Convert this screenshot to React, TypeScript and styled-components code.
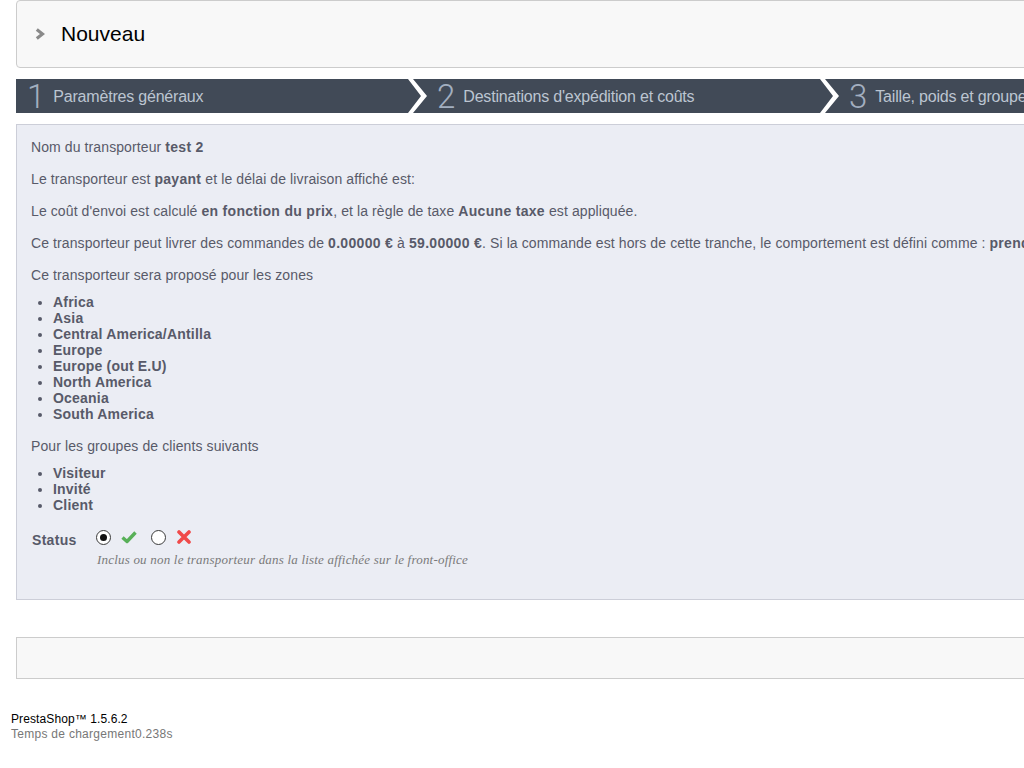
import React from "react";
import styled, { createGlobalStyle } from "styled-components";

const Global = createGlobalStyle`
  html, body {
    margin: 0;
    padding: 0;
    overflow: hidden;
    background: #ffffff;
    font-family: "Liberation Sans", Arial, sans-serif;
  }
`;

const Page = styled.div`
  width: 1600px;
  display: flex;
  flex-direction: column;
`;

const Main = styled.div`
  padding-left: 16px;
  display: flex;
  flex-direction: column;
`;

const TitleBox = styled.div`
  box-sizing: border-box;
  height: 68px;
  background: #f8f8f8;
  border: 1px solid #cccccc;
  border-radius: 4px;
  display: flex;
  align-items: center;
  padding-left: 18px;
  gap: 16px;
`;

const Title = styled.h2`
  margin: 0;
  font-size: 21px;
  font-weight: normal;
  color: #000;
`;

const StepBar = styled.ol`
  list-style: none;
  margin: 11px 0 0;
  padding: 0;
  height: 34px;
  background: #414a57;
  display: flex;
  align-items: stretch;
`;

const Step = styled.li<{ $first?: boolean }>`
  width: 392px;
  display: flex;
  align-items: center;
  padding-left: ${(p) => (p.$first ? "11px" : "9px")};
  box-sizing: border-box;
  flex: none;
`;

const StepNum = styled.span`
  font-family: Roboto, "Liberation Sans", sans-serif;
  font-weight: 300;
  font-size: 33px;
  line-height: 34px;
  color: #a3afc0;
  margin-right: 8px;
  margin-top: 1px;
`;

const StepLabel = styled.span`
  font-size: 16px;
  color: #bcc5d1;
  white-space: nowrap;
  letter-spacing: -0.2px;
  margin-top: 2px;
`;

const Sep = styled.svg`
  width: 20px;
  height: 34px;
  flex: none;
  display: block;
`;

const Panel = styled.div`
  margin-top: 11px;
  background: #ebedf4;
  border: 1px solid #ccced8;
  padding: 13px 14px 32px;
  color: #585a69;
  font-size: 14px;
  b {
    letter-spacing: 0.3px;
  }
`;

const Para = styled.p<{ $tight?: boolean }>`
  margin: 0 0 ${(p) => (p.$tight ? "10px" : "14px")};
  line-height: 18px;
  white-space: nowrap;
  letter-spacing: 0.1px;
`;

const List = styled.ul<{ $last?: boolean }>`
  margin: 0 0 ${(p) => (p.$last ? "0" : "15px")};
  padding-left: 22px;
  line-height: 16px;
  font-weight: bold;
  letter-spacing: 0.2px;
`;

const StatusRow = styled.div`
  margin-top: 15px;
  display: flex;
  align-items: flex-start;
`;

const StatusLabel = styled.label`
  width: 65px;
  padding-left: 1px;
  box-sizing: border-box;
  font-weight: bold;
  line-height: 18px;
  padding-top: 3px;
  letter-spacing: 0.3px;
`;

const StatusField = styled.div`
  display: flex;
  flex-direction: column;
`;

const RadioGroup = styled.div`
  height: 18px;
  display: flex;
  align-items: center;
`;

const Radio = styled.span<{ $checked?: boolean }>`
  box-sizing: border-box;
  width: 15px;
  height: 15px;
  border-radius: 50%;
  border: 1px solid #3a3a3a;
  background: #fff;
  display: flex;
  align-items: center;
  justify-content: center;
  &::after {
    content: "";
    width: 7px;
    height: 7px;
    border-radius: 50%;
    background: ${(p) => (p.$checked ? "#111" : "transparent")};
  }
`;

const Icon = styled.svg<{ $ml: number; $mr: number }>`
  display: block;
  margin-left: ${(p) => p.$ml}px;
  margin-right: ${(p) => p.$mr}px;
`;

const Help = styled.p`
  margin: 6px 0 0 1px;
  font-family: "Liberation Serif", "DejaVu Serif", serif;
  font-style: italic;
  font-size: 13px;
  line-height: 15px;
  letter-spacing: 0.2px;
  color: #7a7a7a;
  white-space: nowrap;
`;

const BottomBox = styled.div`
  margin-top: 37px;
  box-sizing: border-box;
  height: 42px;
  background: #f8f8f8;
  border: 1px solid #cccccc;
`;

const Footer = styled.div`
  margin-top: 33px;
  padding-left: 11px;
  font-size: 12px;
  line-height: 15px;
`;

const Version = styled.div`
  color: #000;
  letter-spacing: 0.1px;
`;

const LoadTime = styled.div`
  color: #777;
  letter-spacing: 0.28px;
`;

const Chevron = () => (
  <svg width="10" height="12" viewBox="0 0 10 12">
    <path d="M1.8 1.5 L7.5 6 L1.8 10.5" fill="none" stroke="#8a8a8a" strokeWidth="3.2" />
  </svg>
);

const Separator = () => (
  <Sep viewBox="0 0 20 34">
    <path d="M0 0 L5 0 L19 17 L5 34 L0 34 L13 17 Z" fill="#ffffff" />
  </Sep>
);

const steps = [
  "Paramètres généraux",
  "Destinations d'expédition et coûts",
  "Taille, poids et groupes",
];

export default function App() {
  return (
    <Page>
      <Global />
      <Main>
        <TitleBox>
          <Chevron />
          <Title>Nouveau</Title>
        </TitleBox>

        <StepBar>
          {steps.map((s, i) => (
            <React.Fragment key={s}>
              <Step $first={i === 0}>
                <StepNum>{i + 1}</StepNum>
                <StepLabel>{s}</StepLabel>
              </Step>
              {i < steps.length - 1 && <Separator />}
            </React.Fragment>
          ))}
        </StepBar>

        <Panel>
          <Para>
            Nom du transporteur <b>test 2</b>
          </Para>
          <Para>
            Le transporteur est <b>payant</b> et le délai de livraison affiché est:
          </Para>
          <Para>
            Le coût d'envoi est calculé <b>en fonction du prix</b>, et la règle de taxe{" "}
            <b>Aucune taxe</b> est appliquée.
          </Para>
          <Para>
            Ce transporteur peut livrer des commandes de <b>0.00000 €</b> à <b>59.00000 €</b>. Si la
            commande est hors de cette tranche, le comportement est défini comme :{" "}
            <b>prendre la tranche la plus grande</b>
          </Para>
          <Para $tight>Ce transporteur sera proposé pour les zones</Para>
          <List>
            <li>Africa</li>
            <li>Asia</li>
            <li>Central America/Antilla</li>
            <li>Europe</li>
            <li>Europe (out E.U)</li>
            <li>North America</li>
            <li>Oceania</li>
            <li>South America</li>
          </List>
          <Para $tight>Pour les groupes de clients suivants</Para>
          <List $last>
            <li>Visiteur</li>
            <li>Invité</li>
            <li>Client</li>
          </List>

          <StatusRow>
            <StatusLabel>Status</StatusLabel>
            <StatusField>
              <RadioGroup>
                <Radio $checked />
                <Icon $ml={10} $mr={14} width="16" height="14" viewBox="0 0 16 14">
                  <path d="M1.5 7.5 L6 11.5 L14.5 2.5" fill="none" stroke="#58b058" strokeWidth="3.4" strokeLinejoin="round" />
                </Icon>
                <Radio />
                <Icon $ml={11} $mr={0} width="14" height="14" viewBox="0 0 14 14">
                  <path d="M2 2 L12 12 M12 2 L2 12" fill="none" stroke="#f04a4a" strokeWidth="3.6" strokeLinecap="round" />
                </Icon>
              </RadioGroup>
              <Help>Inclus ou non le transporteur dans la liste affichée sur le front-office</Help>
            </StatusField>
          </StatusRow>
        </Panel>

        <BottomBox />
      </Main>
      <Footer>
        <Version>PrestaShop™ 1.5.6.2</Version>
        <LoadTime>Temps de chargement0.238s</LoadTime>
      </Footer>
    </Page>
  );
}
